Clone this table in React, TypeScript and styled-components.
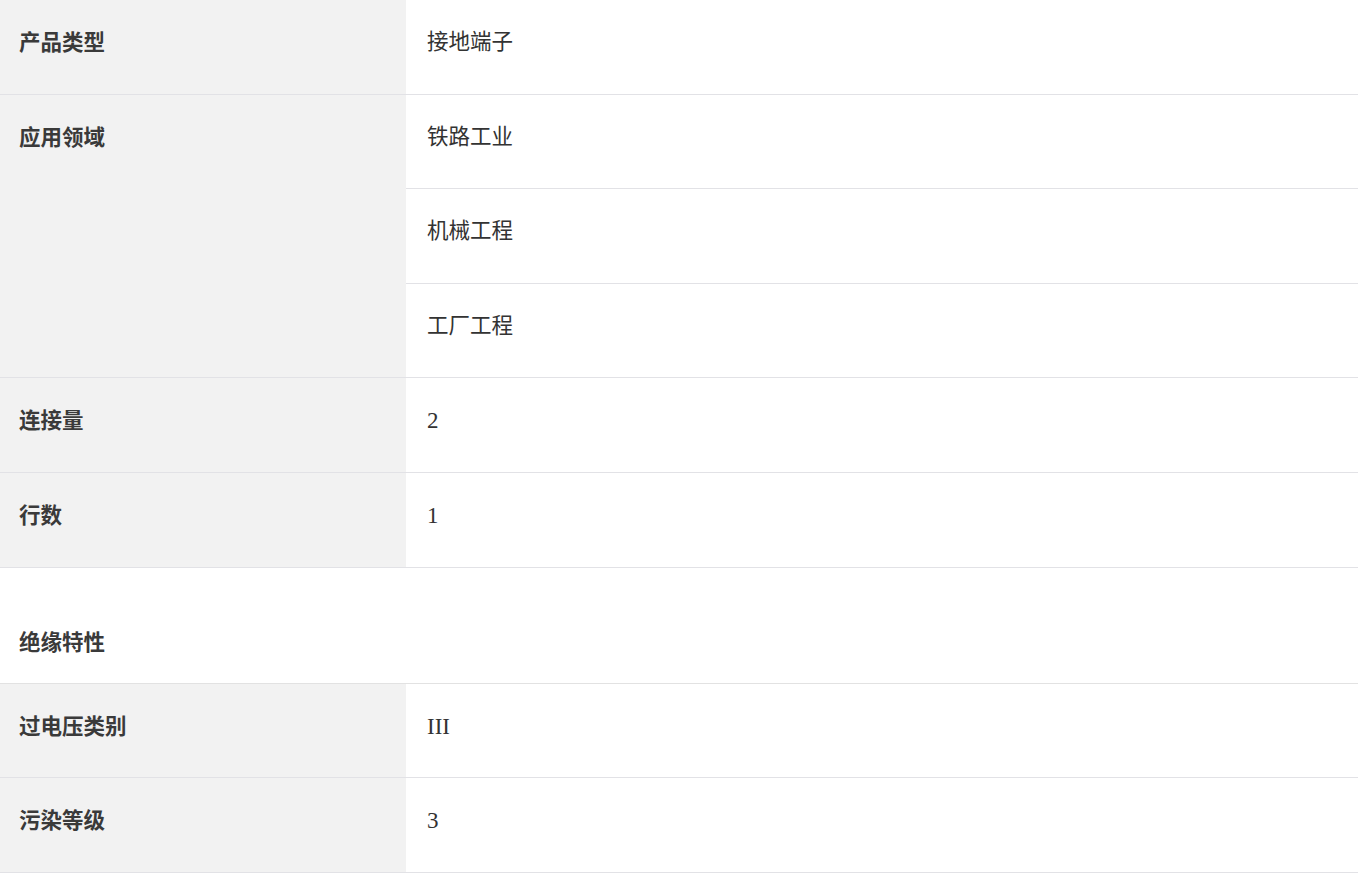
import React from "react";
import styled, { createGlobalStyle } from "styled-components";

const GlobalStyle = createGlobalStyle`
  html, body {
    margin: 0;
    padding: 0;
    background: #fff;
  }
  body {
    font-family: "Liberation Serif", "Noto Sans CJK SC", serif;
    color: #333;
  }
`;

const Sheet = styled.div`
  width: 1358px;
  display: grid;
  grid-template-columns: 406px 1fr;
`;

const Label = styled.div<{ $span?: number }>`
  grid-row: span ${(p) => p.$span ?? 1};
  background: #f2f2f2;
  border-bottom: 1px solid #e2e2e6;
  padding: 24px 19px 0;
  font: 700 21.5px/33px "Noto Sans CJK SC", sans-serif;
  color: #3a3a3a;
`;

// latin values (numbers, roman numerals) render a touch larger than CJK ones
const Value = styled.div<{ $latin?: boolean }>`
  box-sizing: border-box;
  height: 94.6px;
  border-bottom: 1px solid #e2e2e6;
  padding: 26px 21px 0;
  font: 400 ${(p) => (p.$latin ? "23px" : "21.5px")} / 33px "Liberation Serif",
    "Noto Sans CJK SC", serif;
  color: #333;
`;

const Section = styled.div`
  grid-column: 1 / -1;
  box-sizing: border-box;
  height: 116px;
  border-bottom: 1px solid #e2e2e2;
  padding: 56px 19px 0;
  font: 700 21.5px/33px "Noto Sans CJK SC", sans-serif;
  color: #3a3a3a;
`;

type Spec = { label: string; values: string[] };

const general: Spec[] = [
  { label: "产品类型", values: ["接地端子"] },
  { label: "应用领域", values: ["铁路工业", "机械工程", "工厂工程"] },
  { label: "连接量", values: ["2"] },
  { label: "行数", values: ["1"] },
];

const insulation: Spec[] = [
  { label: "过电压类别", values: ["III"] },
  { label: "污染等级", values: ["3"] },
];

const isLatin = (v: string) => /^[\x20-\x7e]+$/.test(v);

const renderSpecs = (specs: Spec[]) =>
  specs.map((s) => (
    <React.Fragment key={s.label}>
      <Label $span={s.values.length}>{s.label}</Label>
      {s.values.map((v) => (
        <Value key={v} $latin={isLatin(v)}>
          {v}
        </Value>
      ))}
    </React.Fragment>
  ));

const App = () => {
  return (
    <>
      <GlobalStyle />
      <Sheet>
        {renderSpecs(general)}
        <Section>绝缘特性</Section>
        {renderSpecs(insulation)}
      </Sheet>
    </>
  );
};

export default App;
